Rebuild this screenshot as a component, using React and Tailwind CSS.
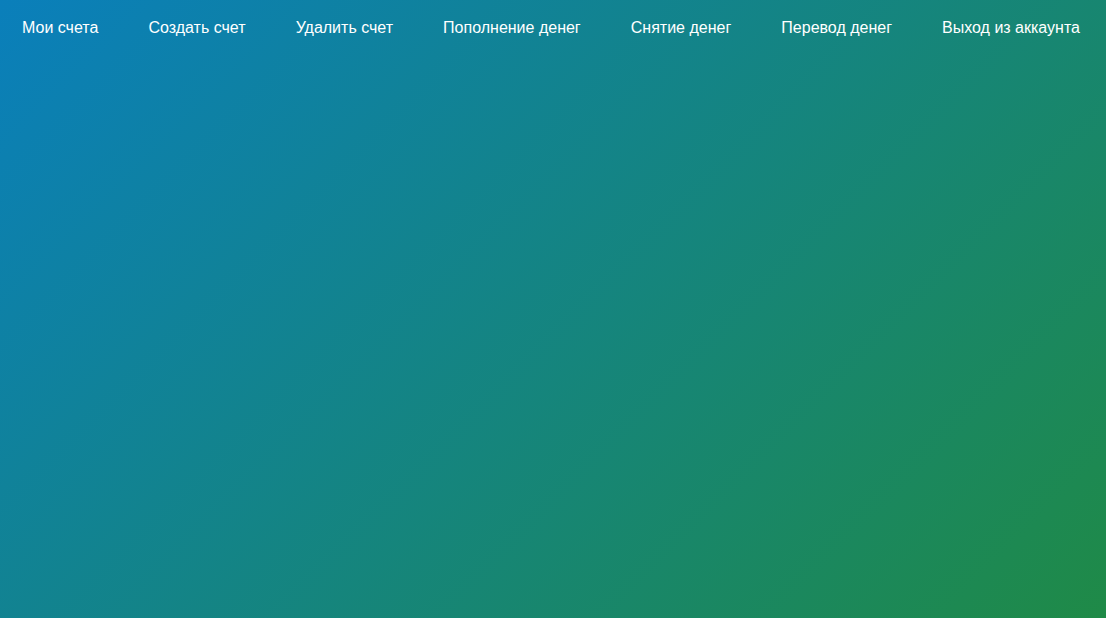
export default function App() {
  const links = [
    'Мои счета',
    'Создать счет',
    'Удалить счет',
    'Пополнение денег',
    'Снятие денег',
    'Перевод денег',
    'Выход из аккаунта',
  ];

  return (
    <div className="min-h-[618px] h-screen w-full bg-[linear-gradient(135deg,#0a7fbb,#1f8a47)] font-['Liberation_Sans',Arial,sans-serif]">
      {/* Navigation */}
      <nav className="flex justify-between items-center pl-[22px] pr-[26px] pt-[16px] pb-[14px]">
        {links.map((link) => (
          <a key={link} href="#" className="text-white text-[16px] leading-6">
            {link}
          </a>
        ))}
      </nav>
    </div>
  );
}
